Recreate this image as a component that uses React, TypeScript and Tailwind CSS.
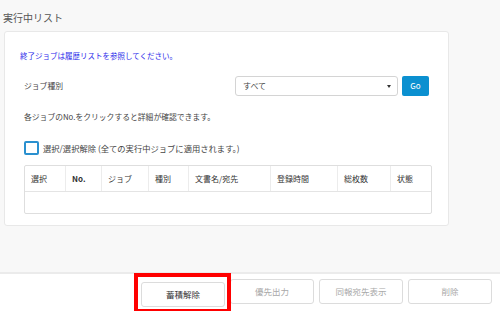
import React from "react";

const columns = [
  { label: "選択", w: "w-[41px]" },
  { label: "No.", w: "w-[36px]", bold: true },
  { label: "ジョブ", w: "w-[47px]" },
  { label: "種別", w: "w-[40px]" },
  { label: "文書名/宛先", w: "w-[82px]" },
  { label: "登録時間", w: "w-[67px]" },
  { label: "総枚数", w: "w-[53px]" },
  { label: "状態", w: "flex-1" },
];

function FooterButton({ label, active }: { label: string; active?: boolean }) {
  return (
    <button
      className={
        "w-[84px] h-[25px] rounded-[3px] border border-[#dcdcdc] bg-white text-[8.5px] leading-none " +
        (active ? "text-[#333]" : "text-[#a8a8a8]")
      }
    >
      {label}
    </button>
  );
}

export default function App() {
  return (
    <div
      className="w-[500px] h-[311px] flex flex-col bg-[#f8f8f8] text-[#444] overflow-hidden"
      style={{ fontFamily: '"Noto Sans CJK JP", "Noto Sans", sans-serif' }}
    >
      <div className="flex-1">
        <h1 className="h-[31px] pl-[3px] pt-[11px] text-[10px] leading-[14px] text-[#555]">実行中リスト</h1>

        <div className="ml-[4px] w-[445px] h-[195px] bg-white border border-[#e8e8e8] rounded-[3px]">
          <p className="pl-[15px] pt-[18px] text-[7.5px] leading-[12px] text-[#2b2bea]">
            終了ジョブは履歴リストを参照してください。
          </p>

          <div className="pl-[19px] pr-[18px]">
            <div className="mt-[14px] flex items-center">
              <span className="w-[211px] text-[7.8px] leading-[12px]">ジョブ種別</span>
              <div className="w-[163px] h-[20px] border border-[#d4d4d4] rounded-[3px] flex items-center justify-between pl-[7px] pr-[6px]">
                <span className="text-[8px] text-[#444]">すべて</span>
                <span className="w-0 h-0 border-l-[2.5px] border-r-[2.5px] border-t-[3px] border-l-transparent border-r-transparent border-t-[#333]" />
              </div>
              <button className="ml-[4px] w-[27px] h-[20px] rounded-[2px] bg-[#0b90d0] text-white text-[8px] leading-none">
                Go
              </button>
            </div>

            <p className="mt-[15px] text-[7.8px] leading-[12px]">各ジョブのNo.をクリックすると詳細が確認できます。</p>

            <label className="mt-[18px] flex items-center h-[14px]">
              <span className="w-[15px] h-[14px] border-2 border-[#2a90cf] rounded-[2px]" />
              <span className="ml-[4px] text-[8.3px] leading-none">選択/選択解除 (全ての実行中ジョブに適用されます。)</span>
            </label>

            <div className="mt-[10px] w-[408px] h-[49px] border border-[#dedede] rounded-[2px] flex flex-col">
              <div className="h-[26px] flex border-b border-[#e4e4e4]">
                {columns.map((c, i) => (
                  <div
                    key={c.label}
                    className={
                      c.w +
                      " flex items-center pl-[6px] text-[8px] text-[#333] " +
                      (c.bold ? "font-bold " : "font-normal ") +
                      (i < columns.length - 1 ? "border-r border-[#ececec]" : "")
                    }
                  >
                    {c.label}
                  </div>
                ))}
              </div>
              <div className="flex-1" />
            </div>
          </div>
        </div>
      </div>

      <div className="h-[39px] border-t-2 border-[#ebebeb] bg-white flex items-start pt-[5px] pl-[141px] gap-[5px]">
        <div className="relative">
          <FooterButton label="蓄積解除" active />
          <div className="absolute -left-[7px] -right-[6px] -top-[6px] -bottom-[6px] border-[4px] border-[#ff0000]" />
        </div>
        <FooterButton label="優先出力" />
        <FooterButton label="同報宛先表示" />
        <FooterButton label="削除" />
      </div>
    </div>
  );
}
